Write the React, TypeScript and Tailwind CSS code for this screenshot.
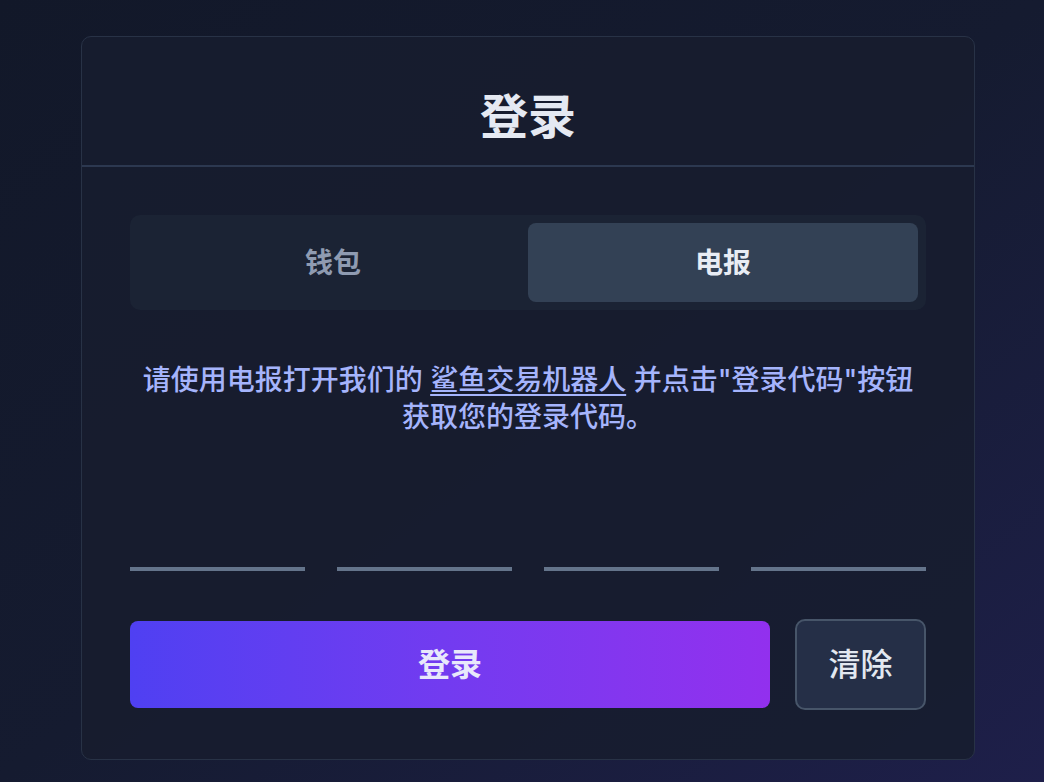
import { useState } from 'react';

const font = "font-['Inter','Noto_Sans_CJK_SC',sans-serif]";

function Tabs({ active, onChange }: { active: string; onChange: (t: string) => void }) {
  const tabs = [
    { id: 'wallet', label: '钱包' },
    { id: 'telegram', label: '电报' },
  ];
  return (
    <div className="grid grid-cols-2 rounded-[10px] bg-[#1b2334] p-2">
      {tabs.map((t) => (
        <button
          key={t.id}
          onClick={() => onChange(t.id)}
          className={
            t.id === active
              ? 'h-[79px] rounded-lg bg-[#334155] text-[28px] font-bold text-[#e8ecf4]'
              : 'h-[79px] rounded-lg text-[28px] font-bold text-[#8f9bb1]'
          }
        >
          {t.label}
        </button>
      ))}
    </div>
  );
}

function CodeInputs() {
  return (
    <div className="grid grid-cols-4 gap-8">
      {[0, 1, 2, 3].map((i) => (
        <input
          key={i}
          maxLength={1}
          className="h-[44px] border-b-4 border-[#64748b] bg-transparent text-center text-[32px] text-white outline-none"
        />
      ))}
    </div>
  );
}

export default function App() {
  const [tab, setTab] = useState('telegram');

  return (
    <div
      className={`flex min-h-screen justify-center bg-gradient-to-br from-[#121829] via-[#151b30] to-[#1e1f4a] pt-9 pl-3 ${font}`}
    >
      <div className="h-[724px] w-[894px] rounded-[10px] border border-[#283246] bg-[#171d2f]/90">
        <div className="flex h-[128px] items-end justify-center pb-[20px]">
          <h1 className="text-[48px] leading-[56px] font-bold text-[#e5e9f2]">登录</h1>
        </div>
        <div className="h-[2px] bg-[#2c3850]" />

        <div className="px-12 pt-[48px]">
          <Tabs active={tab} onChange={setTab} />

          <p className="mt-[52px] text-center text-[28px] leading-[37px] font-medium text-[#a5b4fc]">
            请使用电报打开我们的{' '}
            <a href="#" className="underline underline-offset-4">
              鲨鱼交易机器人
            </a>{' '}
            并点击"登录代码"按钮
            <br />
            获取您的登录代码。
          </p>

          <div className="mt-[91px]">
            <CodeInputs />
          </div>

          <div className="mt-[48px] flex items-center gap-[25px]">
            <button className="h-[87px] flex-1 rounded-lg bg-gradient-to-r from-[#4f40f2] to-[#9230ee] text-[32px] font-bold text-[#e8e8fb]">
              登录
            </button>
            <button className="h-[91px] w-[131px] rounded-[10px] border-2 border-[#475569] bg-[#252f47] text-[32px] font-medium text-[#e2e8f0]">
              清除
            </button>
          </div>
        </div>
      </div>
    </div>
  );
}
